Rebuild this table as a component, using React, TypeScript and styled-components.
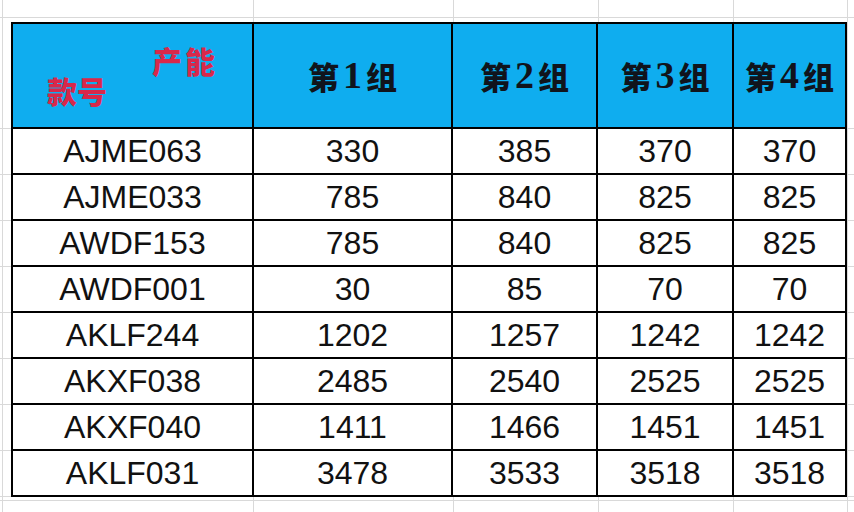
import styled, { createGlobalStyle } from 'styled-components'

const GlobalStyle = createGlobalStyle`
  html, body {
    margin: 0;
    padding: 0;
    background: #fff;
  }
`

const GRID_X = [2, 253, 453, 598, 733, 847]
const GRID_Y = [17, 128, 174, 220, 266, 312, 358, 404, 450, 496, 500]
const LINE = '#d9d9d9'

const vLines = GRID_X.map(
  x => `linear-gradient(to right, transparent ${x}px, ${LINE} ${x}px, ${LINE} ${x + 1}px, transparent ${x + 1}px)`
)
const hLines = GRID_Y.map(
  y => `linear-gradient(to bottom, transparent ${y}px, ${LINE} ${y}px, ${LINE} ${y + 1}px, transparent ${y + 1}px)`
)

const Sheet = styled.div`
  box-sizing: border-box;
  width: 854px;
  height: 512px;
  padding: 22px 0 0 11px;
  overflow: hidden;
  background-color: #fff;
  background-image: ${[...vLines, ...hLines].join(', ')};
`

const Grid = styled.div`
  display: grid;
  grid-template-columns: 239px 197px 143px 134px 111px;
  grid-template-rows: 103px repeat(8, 44px);
  gap: 2px;
  padding: 2px;
  width: max-content;
  background: #000;
`

const HeadCell = styled.div`
  display: flex;
  align-items: center;
  justify-content: center;
  gap: 4px;
  background: #0fadef;
  color: #10141c;
  font-family: 'Noto Sans CJK SC', sans-serif;
  font-weight: 900;
  font-size: 31px;
  line-height: 1;
`

const Num = styled.span`
  font-family: 'Liberation Serif', serif;
  font-weight: 700;
  font-size: 38px;
  line-height: 1;
  transform: translateY(-1px);
`

const CornerCell = styled.div`
  display: flex;
  flex-direction: column;
  padding: 21px 34px 0;
  background: #0fadef;
`

const CornerLabel = styled.span<{ $align: 'start' | 'end' }>`
  align-self: ${p => (p.$align === 'end' ? 'flex-end' : 'flex-start')};
  color: #d8284a;
  font-family: 'Noto Sans CJK SC', sans-serif;
  font-weight: 900;
  font-size: 30px;
  line-height: 30px;
  letter-spacing: ${p => (p.$align === 'end' ? '3px' : '0')};
`

const Cell = styled.div`
  display: flex;
  align-items: center;
  justify-content: center;
  background: #fff;
  color: #111;
  font-family: 'Liberation Sans', Arial, sans-serif;
  font-size: 32px;
  line-height: 1;
`

const groups = [1, 2, 3, 4]

const rows: [string, number[]][] = [
  ['AJME063', [330, 385, 370, 370]],
  ['AJME033', [785, 840, 825, 825]],
  ['AWDF153', [785, 840, 825, 825]],
  ['AWDF001', [30, 85, 70, 70]],
  ['AKLF244', [1202, 1257, 1242, 1242]],
  ['AKXF038', [2485, 2540, 2525, 2525]],
  ['AKXF040', [1411, 1466, 1451, 1451]],
  ['AKLF031', [3478, 3533, 3518, 3518]],
]

export default function App() {
  return (
    <>
      <GlobalStyle />
      <Sheet>
        <Grid>
          <CornerCell>
            <CornerLabel $align="end">产能</CornerLabel>
            <CornerLabel $align="start">款号</CornerLabel>
          </CornerCell>
          {groups.map(n => (
            <HeadCell key={n}>
              第<Num>{n}</Num>组
            </HeadCell>
          ))}
          {rows.map(([code, values]) => [
            <Cell key={code}>{code}</Cell>,
            ...values.map((v, i) => <Cell key={code + i}>{v}</Cell>),
          ])}
        </Grid>
      </Sheet>
    </>
  )
}
